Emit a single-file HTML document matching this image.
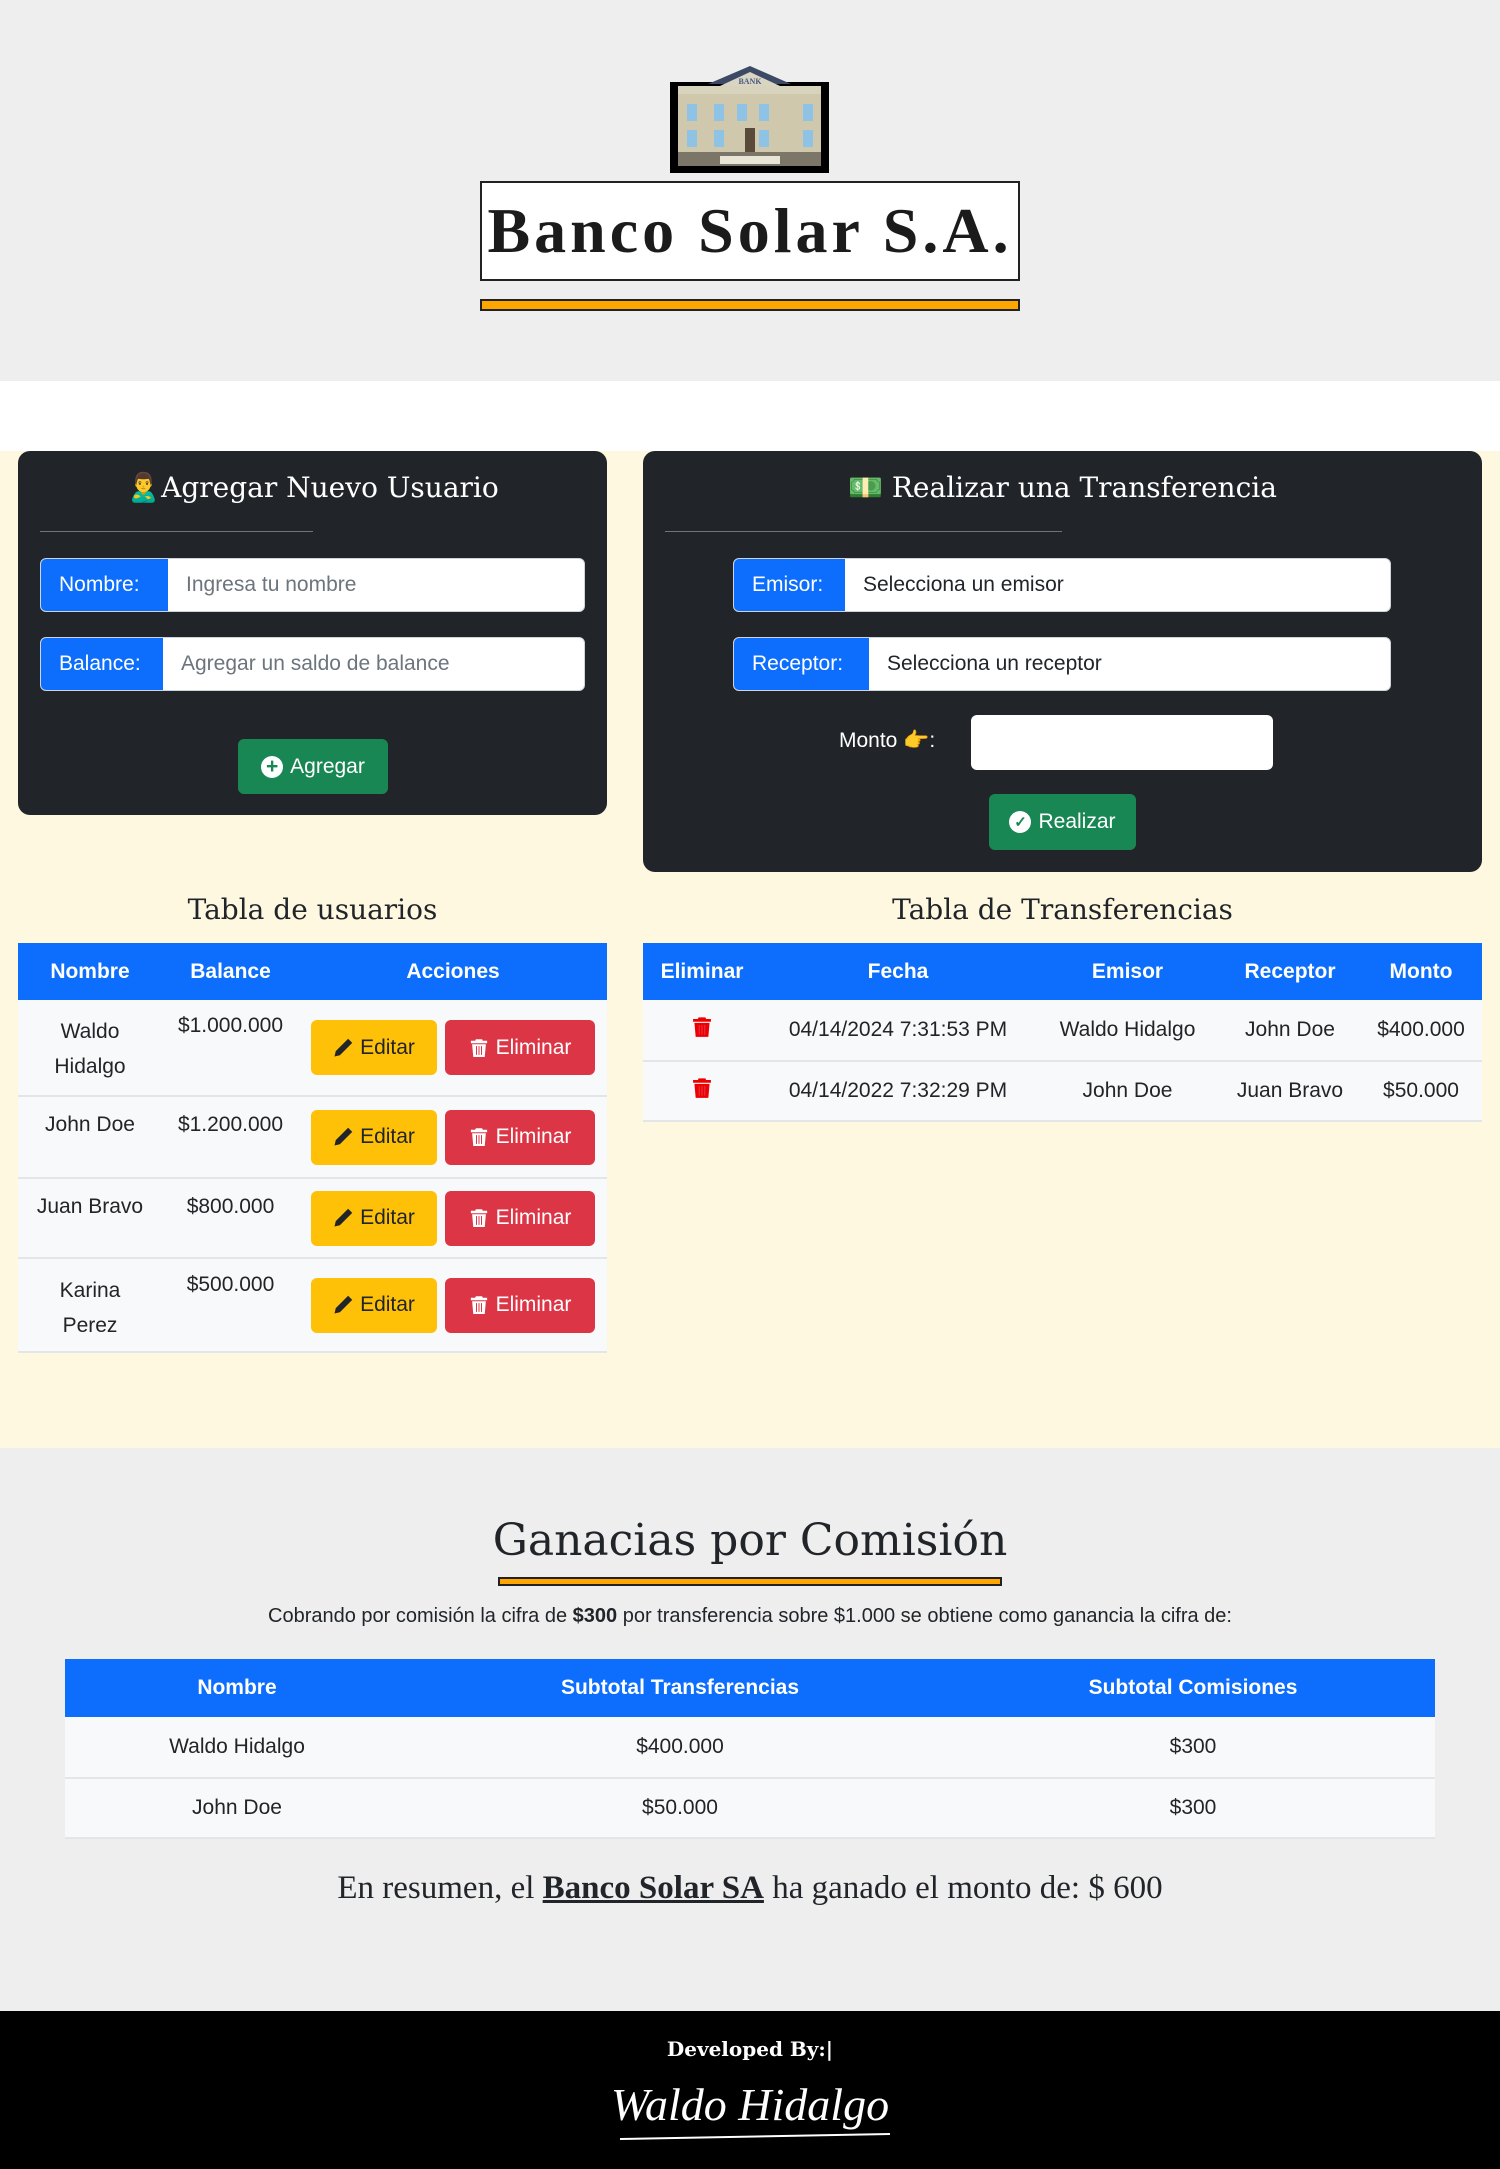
<!DOCTYPE html>
<html><head><meta charset="utf-8">
<style>
*{box-sizing:border-box;margin:0;padding:0}
body{width:1500px;height:2169px;position:relative;font-family:"Liberation Sans",sans-serif;color:#212529;background:#eee;overflow:hidden}
.a{position:absolute}
.serif{font-family:"DejaVu Serif","Liberation Serif",serif}
.card{background:#212529;border-radius:12px}
.ttl{color:#fff;font-size:28px;text-align:center;width:100%}
.hr{height:1px;background:#6c757d}
.ig{display:flex;border:1px solid #ced4da;border-radius:6px;overflow:hidden;background:#fff;height:54px;font-size:21px}
.ig .l{background:#0d6efd;color:#fff;display:flex;align-items:center;padding:0 18px}
.ig .i{display:flex;align-items:center;padding:0 18px;color:#6c757d}
.btn{border-radius:6px;display:flex;align-items:center;justify-content:center;font-size:21px;gap:7px}
table{border-collapse:collapse;font-size:21px;position:absolute}
th{background:#0d6efd;color:#fff;font-weight:bold;height:57px;text-align:center}
td{background:#f8f9fa;border-bottom:2px solid #e3e5e8;text-align:center;vertical-align:middle}
</style></head><body>
<svg width="0" height="0" style="position:absolute">
<defs>
<symbol id="pen" viewBox="0 0 16 16"><path d="M12.1 0.6 15.4 3.9 5.5 13.8 1.2 14.8 2.2 10.5Z M11 1.7 14.3 5" fill="currentColor"/></symbol>
<symbol id="trash" viewBox="0 0 16 16"><path d="M5.5 1h5l.5 1.2H14.5v2H1.5v-2H5Z M2.5 5h11l-.9 10.2H3.4Z" fill="currentColor"/><path d="M6 6.5v7M8 6.5v7M10 6.5v7" stroke="#dc3545" stroke-width=".8"/></symbol>
</defs></svg>
<!-- header -->
<svg class="a" style="left:670px;top:66px" width="159" height="107" viewBox="0 0 159 107">
<rect x="0" y="16" width="159" height="91" fill="#000"/>
<polygon points="38,18 80,0 121,18" fill="#3d4a66"/>
<polygon points="50,20 80,6 110,20" fill="#d9d5c2"/>
<text x="80" y="18" font-size="8" font-weight="bold" fill="#4a5a80" text-anchor="middle" font-family="Liberation Serif">BANK</text>
<rect x="8" y="20" width="143" height="8" fill="#d8d3bd"/>
<rect x="8" y="28" width="143" height="58" fill="#cfc8ad"/>
<g fill="#8fc3e6"><rect x="17" y="38" width="10" height="17"/><rect x="44" y="38" width="10" height="17"/><rect x="67" y="38" width="10" height="17"/><rect x="89" y="38" width="10" height="17"/><rect x="133" y="38" width="10" height="17"/>
<rect x="17" y="64" width="10" height="17"/><rect x="44" y="64" width="10" height="17"/><rect x="89" y="64" width="10" height="17"/><rect x="133" y="64" width="10" height="17"/></g>
<rect x="75" y="62" width="10" height="24" fill="#5a4a3a"/>
<rect x="8" y="86" width="143" height="14" fill="#7b7667"/>
<rect x="50" y="90" width="60" height="8" fill="#e8e4d6"/>
</svg>
<div class="a" style="left:480px;top:181px;width:540px;height:100px;background:#fff;border:2px solid #222;display:flex;align-items:center;justify-content:center;font-family:'Liberation Serif',serif;font-weight:bold;font-size:64px;letter-spacing:4px;color:#1b1b1b;white-space:nowrap">Banco Solar S.A.</div>
<div class="a" style="left:480px;top:299px;width:540px;height:12px;background:#ffa500;border:2px solid #222"></div>
<div class="a" style="left:0;top:381px;width:1500px;height:70px;background:#fff"></div>
<div class="a" style="left:0;top:451px;width:1500px;height:997px;background:#fef8e1"></div>

<!-- left card -->
<div class="a card" style="left:18px;top:451px;width:589px;height:364px">
 <div class="a ttl serif" style="top:20px;left:0">🙎‍♂️Agregar Nuevo Usuario</div>
 <div class="a hr" style="left:22px;top:80px;width:273px"></div>
 <div class="a ig" style="left:22px;top:107px;width:545px"><div class="l" style="width:127px">Nombre:</div><div class="i">Ingresa tu nombre</div></div>
 <div class="a ig" style="left:22px;top:186px;width:545px"><div class="l" style="width:122px">Balance:</div><div class="i">Agregar un saldo de balance</div></div>
 <div class="a btn" style="left:220px;top:288px;width:150px;height:55px;background:#198754;color:#fff"><span style="display:inline-flex;width:22px;height:22px;border-radius:50%;background:#fff;color:#198754;align-items:center;justify-content:center;font-weight:bold">+</span>Agregar</div>
</div>

<!-- right card -->
<div class="a card" style="left:643px;top:451px;width:839px;height:421px">
 <div class="a ttl serif" style="top:20px;left:0">💵 Realizar una Transferencia</div>
 <div class="a hr" style="left:22px;top:80px;width:397px"></div>
 <div class="a ig" style="left:90px;top:107px;width:658px"><div class="l" style="width:111px">Emisor:</div><div class="i" style="color:#212529">Selecciona un emisor</div></div>
 <div class="a ig" style="left:90px;top:186px;width:658px"><div class="l" style="width:135px">Receptor:</div><div class="i" style="color:#212529">Selecciona un receptor</div></div>
 <div class="a" style="left:196px;top:278px;color:#fff;font-size:21px">Monto 👉:</div>
 <div class="a" style="left:328px;top:264px;width:302px;height:55px;background:#fff;border-radius:6px"></div>
 <div class="a btn" style="left:346px;top:343px;width:147px;height:56px;background:#198754;color:#fff"><span style="display:inline-flex;width:22px;height:22px;border-radius:50%;background:#fff;color:#198754;align-items:center;justify-content:center;font-weight:bold;font-size:15px">✓</span>Realizar</div>
</div>

<div class="a serif" style="left:18px;top:893px;width:589px;text-align:center;font-size:28px">Tabla de usuarios</div>
<div class="a serif" style="left:643px;top:893px;width:839px;text-align:center;font-size:28px">Tabla de Transferencias</div>

<table style="left:18px;top:943px;width:589px">
<tr><th style="width:144px">Nombre</th><th style="width:137px">Balance</th><th>Acciones</th></tr>
<tr style="height:96px"><td style="vertical-align:top;padding-top:14px;line-height:35px">Waldo<br>Hidalgo</td><td style="vertical-align:top;padding-top:14px">$1.000.000</td><td><div style="display:flex;gap:8px;justify-content:center"><div class="btn" style="width:126px;height:55px;background:#ffc107"><svg width="20" height="20"><use href="#pen"/></svg>Editar</div><div class="btn" style="width:150px;height:55px;background:#dc3545;color:#fff"><svg width="20" height="20"><use href="#trash"/></svg>Eliminar</div></div></td></tr>
<tr style="height:82px"><td style="vertical-align:top;padding-top:16px">John Doe</td><td style="vertical-align:top;padding-top:16px">$1.200.000</td><td><div style="display:flex;gap:8px;justify-content:center"><div class="btn" style="width:126px;height:55px;background:#ffc107"><svg width="20" height="20"><use href="#pen"/></svg>Editar</div><div class="btn" style="width:150px;height:55px;background:#dc3545;color:#fff"><svg width="20" height="20"><use href="#trash"/></svg>Eliminar</div></div></td></tr>
<tr style="height:80px"><td style="vertical-align:top;padding-top:16px">Juan Bravo</td><td style="vertical-align:top;padding-top:16px">$800.000</td><td><div style="display:flex;gap:8px;justify-content:center"><div class="btn" style="width:126px;height:55px;background:#ffc107"><svg width="20" height="20"><use href="#pen"/></svg>Editar</div><div class="btn" style="width:150px;height:55px;background:#dc3545;color:#fff"><svg width="20" height="20"><use href="#trash"/></svg>Eliminar</div></div></td></tr>
<tr style="height:94px"><td style="vertical-align:top;padding-top:14px;line-height:35px">Karina<br>Perez</td><td style="vertical-align:top;padding-top:14px">$500.000</td><td><div style="display:flex;gap:8px;justify-content:center"><div class="btn" style="width:126px;height:55px;background:#ffc107"><svg width="20" height="20"><use href="#pen"/></svg>Editar</div><div class="btn" style="width:150px;height:55px;background:#dc3545;color:#fff"><svg width="20" height="20"><use href="#trash"/></svg>Eliminar</div></div></td></tr>
</table>

<table style="left:643px;top:943px;width:839px">
<tr><th style="width:118px">Eliminar</th><th style="width:274px">Fecha</th><th style="width:185px">Emisor</th><th style="width:140px">Receptor</th><th>Monto</th></tr>
<tr style="height:61px"><td style="color:#e00"><svg width="22" height="24" style="color:#e00"><use href="#trash"/></svg></td><td>04/14/2024 7:31:53 PM</td><td>Waldo Hidalgo</td><td>John Doe</td><td>$400.000</td></tr>
<tr style="height:60px"><td style="color:#e00"><svg width="22" height="24" style="color:#e00"><use href="#trash"/></svg></td><td>04/14/2022 7:32:29 PM</td><td>John Doe</td><td>Juan Bravo</td><td>$50.000</td></tr>
</table>

<!-- ganancias -->
<div class="a serif" style="left:0;top:1515px;width:1500px;text-align:center;font-size:44px">Ganacias por Comisión</div>
<div class="a" style="left:498px;top:1577px;width:504px;height:9px;background:#ffa500;border:2px solid #222"></div>
<div class="a" style="left:0;top:1605px;width:1500px;text-align:center;font-size:20px">Cobrando por comisión la cifra de <b>$300</b> por transferencia sobre $1.000 se obtiene como ganancia la cifra de:</div>
<table style="left:65px;top:1659px;width:1370px">
<tr><th style="width:344px;height:58px">Nombre</th><th style="width:542px">Subtotal Transferencias</th><th>Subtotal Comisiones</th></tr>
<tr style="height:61px"><td>Waldo Hidalgo</td><td>$400.000</td><td>$300</td></tr>
<tr style="height:60px"><td>John Doe</td><td>$50.000</td><td>$300</td></tr>
</table>
<div class="a" style="left:0;top:1870px;width:1500px;text-align:center;font-family:'Liberation Serif',serif;font-size:33px">En resumen, el <b style="text-decoration:underline">Banco Solar SA</b> ha ganado el monto de: $ 600</div>

<!-- footer -->
<div class="a" style="left:0;top:2011px;width:1500px;height:158px;background:#000"></div>
<div class="a" style="left:0;top:2037px;width:1500px;text-align:center;color:#fff;font-family:'DejaVu Serif',serif;font-weight:bold;font-size:20px">Developed By:|</div>
<div class="a" style="left:580px;top:2078px;width:340px;text-align:center;color:#fff;font-family:'Liberation Serif',serif;font-style:italic;font-size:46px;white-space:nowrap">Waldo Hidalgo</div>
<svg class="a" style="left:620px;top:2125px" width="280" height="20"><path d="M0 14 L270 9" stroke="#fff" stroke-width="2" fill="none"/></svg>
</body></html>
